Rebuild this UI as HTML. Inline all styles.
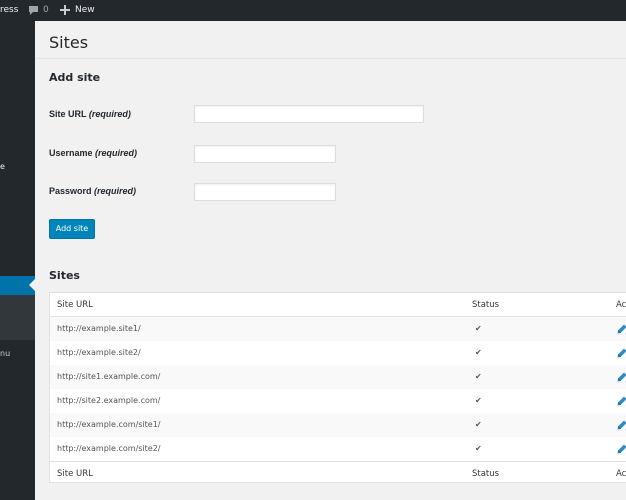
<!DOCTYPE html>
<html><head><meta charset="utf-8"><style>
*{box-sizing:border-box;margin:0;padding:0}
body{width:626px;height:500px;overflow:hidden;background:#f1f1f1;font-family:"DejaVu Sans","Liberation Sans",sans-serif;color:#23282d;position:relative}
#bar{position:absolute;left:0;top:0;width:626px;height:21px;background:#23282d;color:#eee;font-size:9px}
#bar span{position:absolute;top:5px}
#side{position:absolute;left:0;top:21px;width:35px;height:479px;background:#23282d;color:#eee;font-size:8px}
.abs{position:absolute}
h1{position:absolute;left:49px;top:33px;font-size:16px;font-weight:400;color:#23282d}
h2{position:absolute;left:49px;font-size:11px;font-weight:700}
.lbl{position:absolute;left:49px;font-size:9px;font-weight:700;font-family:"Liberation Sans",sans-serif}
.in{position:absolute;left:194px;height:18px;background:#fff;border:1px solid #ddd;box-shadow:inset 0 1px 2px rgba(0,0,0,.07)}
#btn{position:absolute;left:49px;top:219px;width:46px;height:20px;background:#0085ba;border:1px solid #0073aa;border-radius:2px;color:#fff;font-size:8px;text-align:center;line-height:18px}
#tbl{position:absolute;left:49px;top:292px;width:590px;border:1px solid #e1e1e1;background:#fff;font-size:8px;color:#555}
.r{height:24px;position:relative;border-bottom:1px solid transparent}
.r.h{color:#32373c;font-size:8.5px;border-bottom:1px solid #e1e1e1}
.r.f{border-top:1px solid #e1e1e1;border-bottom:none;height:21px;color:#32373c;font-size:8.5px}
.r.s{background:#f9f9f9}
.r span{position:absolute;top:7px}
.c1{left:7px}.c2{left:422px}.c3{left:566px}
.ck{left:425px}
.pen{position:absolute;left:567px;top:7px}
</style></head><body>
<div id="bar"><span style="left:0">ress</span>
<svg class="abs" style="left:28px;top:5px" width="11" height="11" viewBox="0 0 11 11"><path d="M1 1h9v6H5l-3 3V7H1z" fill="#a0a5aa"/></svg>
<span style="left:43px;color:#a0a5aa">0</span>
<svg class="abs" style="left:60px;top:5px" width="10" height="10" viewBox="0 0 10 10"><path d="M4 0h2v4h4v2H6v4H4V6H0V4h4z" fill="#ccc"/></svg>
<span style="left:75px">New</span></div>
<div id="side">
<div class="abs" style="left:0;top:141px">e</div>
<div class="abs" style="left:0;top:255px;width:35px;height:19px;background:#0073aa"></div>
<svg class="abs" style="left:29px;top:258px" width="6" height="12"><path d="M6 0L0 6l6 6z" fill="#f1f1f1"/></svg>
<div class="abs" style="left:0;top:274px;width:35px;height:45px;background:#32373c"></div>
<div class="abs" style="left:0;top:328px;color:#ccc">nu</div>
</div>
<h1>Sites</h1>
<div class="abs" style="left:35px;top:58px;width:591px;height:1px;background:#e5e5e5"></div>
<h2 style="top:71px">Add site</h2>
<div class="lbl" style="top:109px">Site URL <i>(required)</i></div>
<div class="in" style="top:105px;width:230px"></div>
<div class="lbl" style="top:148px">Username <i>(required)</i></div>
<div class="in" style="top:145px;width:142px"></div>
<div class="lbl" style="top:186px">Password <i>(required)</i></div>
<div class="in" style="top:183px;width:142px"></div>
<div id="btn">Add site</div>
<h2 style="top:269px">Sites</h2>
<div id="tbl">
<div class="r h"><span class="c1">Site URL</span><span class="c2">Status</span><span class="c3">Ac</span></div>
<div class="r s"><span class="c1">http://example.site1/</span><span class="ck">✔</span><svg class="pen" width="10" height="10" viewBox="0 0 10 10"><path d="M7 0.5L9.5 3L3.5 9L0.5 9.5L1 6.5Z" fill="#2e8bc0"/><path d="M1 6.5L3.5 9" stroke="#1a5e86" stroke-width="0.8"/></svg></div>
<div class="r"><span class="c1">http://example.site2/</span><span class="ck">✔</span><svg class="pen" width="10" height="10" viewBox="0 0 10 10"><path d="M7 0.5L9.5 3L3.5 9L0.5 9.5L1 6.5Z" fill="#2e8bc0"/><path d="M1 6.5L3.5 9" stroke="#1a5e86" stroke-width="0.8"/></svg></div>
<div class="r s"><span class="c1">http://site1.example.com/</span><span class="ck">✔</span><svg class="pen" width="10" height="10" viewBox="0 0 10 10"><path d="M7 0.5L9.5 3L3.5 9L0.5 9.5L1 6.5Z" fill="#2e8bc0"/><path d="M1 6.5L3.5 9" stroke="#1a5e86" stroke-width="0.8"/></svg></div>
<div class="r"><span class="c1">http://site2.example.com/</span><span class="ck">✔</span><svg class="pen" width="10" height="10" viewBox="0 0 10 10"><path d="M7 0.5L9.5 3L3.5 9L0.5 9.5L1 6.5Z" fill="#2e8bc0"/><path d="M1 6.5L3.5 9" stroke="#1a5e86" stroke-width="0.8"/></svg></div>
<div class="r s"><span class="c1">http://example.com/site1/</span><span class="ck">✔</span><svg class="pen" width="10" height="10" viewBox="0 0 10 10"><path d="M7 0.5L9.5 3L3.5 9L0.5 9.5L1 6.5Z" fill="#2e8bc0"/><path d="M1 6.5L3.5 9" stroke="#1a5e86" stroke-width="0.8"/></svg></div>
<div class="r"><span class="c1">http://example.com/site2/</span><span class="ck">✔</span><svg class="pen" width="10" height="10" viewBox="0 0 10 10"><path d="M7 0.5L9.5 3L3.5 9L0.5 9.5L1 6.5Z" fill="#2e8bc0"/><path d="M1 6.5L3.5 9" stroke="#1a5e86" stroke-width="0.8"/></svg></div>
<div class="r f"><span class="c1">Site URL</span><span class="c2">Status</span><span class="c3">Ac</span></div>
</div>
</body></html>
